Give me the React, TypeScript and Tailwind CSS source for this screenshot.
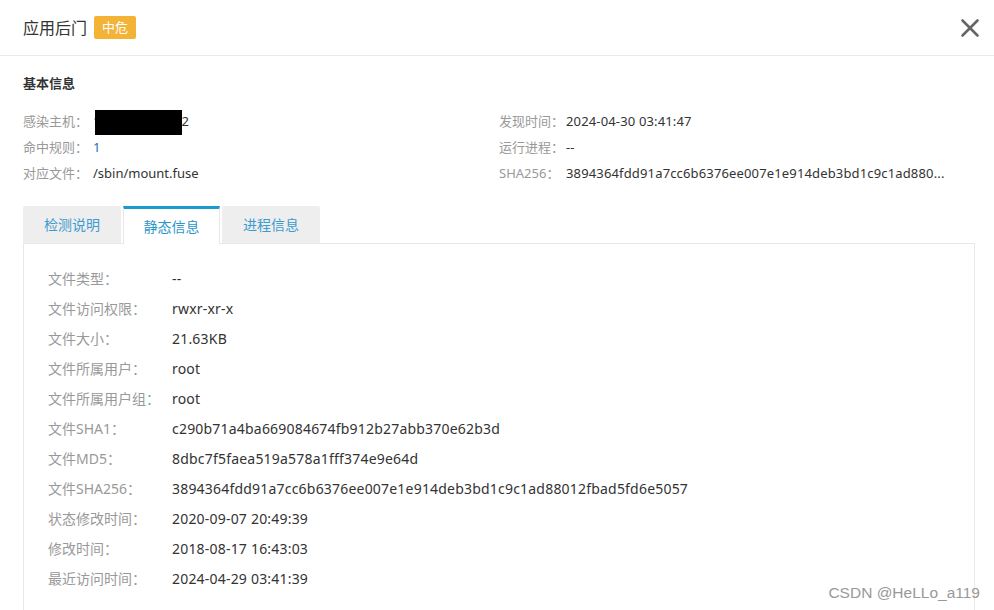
import { X } from "lucide-react";

const font = { fontFamily: '"Noto Sans", "Noto Sans CJK SC", sans-serif' };

const basicLeft: [string, React.ReactNode][] = [
  [
    "感染主机：",
    <span className="relative inline-flex items-center">
      <span>1</span>
      <span className="ml-[-5px] mr-[-1px] inline-block h-[25px] w-[87px] bg-black" />
      <span>2</span>
    </span>,
  ],
  ["命中规则：", <span className="text-[#1f6fb5]">1</span>],
  ["对应文件：", "/sbin/mount.fuse"],
];

const basicRight: [string, string][] = [
  ["发现时间：", "2024-04-30 03:41:47"],
  ["运行进程：", "--"],
  ["SHA256：", "3894364fdd91a7cc6b6376ee007e1e914deb3bd1c9c1ad880..."],
];

const staticInfo: [string, string][] = [
  ["文件类型：", "--"],
  ["文件访问权限：", "rwxr-xr-x"],
  ["文件大小：", "21.63KB"],
  ["文件所属用户：", "root"],
  ["文件所属用户组：", "root"],
  ["文件SHA1：", "c290b71a4ba669084674fb912b27abb370e62b3d"],
  ["文件MD5：", "8dbc7f5faea519a578a1fff374e9e64d"],
  ["文件SHA256：", "3894364fdd91a7cc6b6376ee007e1e914deb3bd1c9c1ad88012fbad5fd6e5057"],
  ["状态修改时间：", "2020-09-07 20:49:39"],
  ["修改时间：", "2018-08-17 16:43:03"],
  ["最近访问时间：", "2024-04-29 03:41:39"],
];

const tabs = ["检测说明", "静态信息", "进程信息"];

export default function App() {
  return (
    <div className="relative h-[610px] w-[994px] overflow-hidden bg-white text-[#333]" style={font}>
      <div className="flex h-[56px] items-center justify-between border-b border-[#ebebeb] pl-[23px] pr-[9px]">
        <div className="flex items-center gap-[7px]">
          <span className="text-[16px]">应用后门</span>
          <span className="flex h-[23px] items-center rounded-[2px] bg-[#f2b337] px-[8px] text-[13px] text-white">
            中危
          </span>
        </div>
        <X className="h-[30px] w-[30px] text-[#666]" strokeWidth={2.1} />
      </div>

      <div className="px-[23px]">
        <div className="mt-[17px] text-[13px] font-bold leading-[20px]">基本信息</div>

        <div className="mt-[16px] grid grid-cols-2 text-[13px]">
          <div className="flex flex-col">
            {basicLeft.map(([k, v]) => (
              <div key={k} className="flex h-[26px] items-center">
                <span className="w-[70px] text-[#999]">{k}</span>
                <span>{v}</span>
              </div>
            ))}
          </div>
          <div className="flex flex-col pl-[2px]">
            {basicRight.map(([k, v]) => (
              <div key={k} className="flex h-[26px] items-center">
                <span className="w-[67px] text-[#999]">{k}</span>
                <span className="truncate tracking-[0.15px]">{v}</span>
              </div>
            ))}
          </div>
        </div>

        <div className="mt-[19px] flex gap-[2px]">
          {tabs.map((t, i) =>
            i === 1 ? (
              <div
                key={t}
                className="relative -mb-px flex h-[38px] w-[97px] items-center justify-center border-x border-t-[3px] border-x-[#e8e8e8] border-t-[#1a9ace] bg-white text-[14px] text-[#2a97cc]"
              >
                {t}
              </div>
            ) : (
              <div
                key={t}
                className="flex h-[37px] w-[98px] items-center justify-center rounded-t-[2px] bg-[#eeeeee] text-[14px] text-[#3d9ccf]"
              >
                {t}
              </div>
            ),
          )}
        </div>

        <div className="w-[952px] border border-[#e8e8e8] px-[24px] pt-[19px] pb-[20px] text-[14px]">
          {staticInfo.map(([k, v]) => (
            <div key={k} className="flex h-[30px] items-center">
              <span className="w-[124px] text-[#999]">{k}</span>
              <span className="tracking-[0.2px]">{v}</span>
            </div>
          ))}
        </div>
      </div>

      <div
        className="absolute right-[14px] bottom-[6px] text-[15.5px] text-[#999]"
        style={{ fontFamily: '"Liberation Sans", sans-serif' }}
      >
        CSDN @HeLLo_a119
      </div>
    </div>
  );
}
